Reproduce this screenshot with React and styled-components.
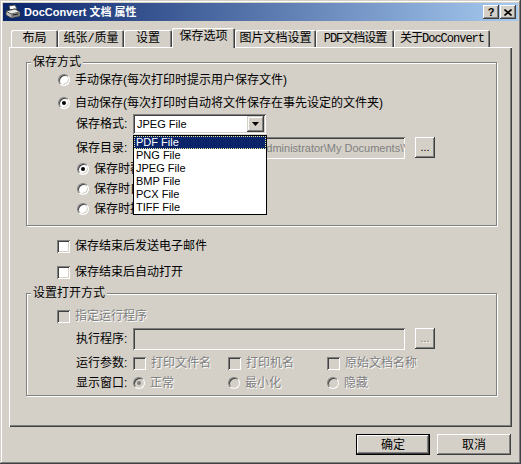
import React from 'react'
import styled, { createGlobalStyle } from 'styled-components'

const GlobalStyle = createGlobalStyle`
	html, body {
		margin: 0;
		padding: 0;
		background: #d4d0c8;
	}
	body {
		font-family: "Liberation Sans", "Noto Sans CJK SC", sans-serif;
		font-size: 12px;
		color: #000;
	}
`

const Window = styled.div`
	width: 521px;
	height: 464px;
	box-sizing: border-box;
	padding: 3px;
	background: #d4d0c8;
	box-shadow: inset -1px -1px #404040, inset 1px 1px #d4d0c8, inset -2px -2px #808080, inset 2px 2px #fff;
	display: flex;
	flex-direction: column;
`

const TitleBar = styled.div`
	height: 18px;
	display: flex;
	align-items: center;
	padding: 0 2px;
	background: linear-gradient(to right, #0a246a, #a6caf0);
`

const TitleText = styled.span`
	flex: 1;
	margin-left: 3px;
	color: #fff;
	font-weight: bold;
	font-size: 11px;
	line-height: 14px;
	font-family: "Liberation Sans", "Noto Sans CJK SC", sans-serif;
`

const CaptionButton = styled.div`
	width: 16px;
	height: 14px;
	box-sizing: border-box;
	margin-left: ${p => p.$gap || 0}px;
	background: #d4d0c8;
	box-shadow: inset -1px -1px #404040, inset 1px 1px #fff, inset -2px -2px #808080;
	display: flex;
	align-items: center;
	justify-content: center;
	font: bold 11px "Liberation Sans", sans-serif;
	line-height: 12px;
`

const Body = styled.div`
	flex: 1;
	padding: 7px 6px 0 6px;
	display: flex;
	flex-direction: column;
`

const TabStrip = styled.div`
	height: 19px;
	padding-left: 2px;
	display: flex;
	align-items: flex-end;
`

const Tab = styled.div`
	position: relative;
	z-index: ${p => (p.$active ? 2 : 0)};
	width: ${p => p.$w}px;
	height: ${p => (p.$active ? 20 : 17)}px;
	margin-bottom: ${p => (p.$active ? -1 : 0)}px;
	box-sizing: border-box;
	padding-bottom: ${p => (p.$active ? 2 : 0)}px;
	background: #d4d0c8;
	border-radius: 2px 2px 0 0;
	box-shadow: inset 1px 1px #fff, inset -1px 0 #404040, inset -2px 0 #808080;
	display: flex;
	align-items: center;
	justify-content: center;
	line-height: 14px;
	white-space: nowrap;
	font-family: "Liberation Mono", "Noto Sans CJK SC", monospace;
	font-size: 12px;
	letter-spacing: ${p => (p.$mono ? '-1px' : '0')};
`

const Panel = styled.div`
	height: 380px;
	box-sizing: border-box;
	background: #d4d0c8;
	box-shadow: inset 1px 1px #fff, inset -1px -1px #404040, inset -2px -2px #808080;
	display: flex;
	flex-direction: column;
`

const Group = styled.div`
	margin: ${p => p.$top}px 0 0 17px;
	width: 471px;
	height: ${p => p.$h}px;
	box-sizing: border-box;
	border: 1px solid #808080;
	box-shadow: 1px 1px 0 #fff, inset 1px 1px 0 #fff;
	display: flex;
	flex-direction: column;
`

const Legend = styled.div`
	align-self: flex-start;
	margin: -8px 0 0 4px;
	padding: 0 2px;
	height: 14px;
	line-height: 14px;
	background: #d4d0c8;
`

const Row = styled.div`
	display: flex;
	align-items: ${p => p.$align || 'center'};
	height: ${p => p.$h || 16}px;
	margin-top: ${p => p.$mt || 0}px;
	padding-left: ${p => p.$pl || 0}px;
	line-height: 14px;
	white-space: nowrap;
`

const Option = styled.label`
	display: flex;
	align-items: center;
	width: ${p => (p.$w ? `${p.$w}px` : 'auto')};
	flex: none;
	color: ${p => (p.$disabled ? '#808080' : '#000')};
	text-shadow: ${p => (p.$disabled ? '1px 1px 0 #fff' : 'none')};
`

const OptionText = styled.span`
	margin-left: 5px;
`

const FieldLabel = styled.span`
	width: 57px;
	flex: none;
	align-self: center;
`

const RadioMark = styled.span`
	width: 12px;
	height: 12px;
	flex: none;
	box-sizing: border-box;
	border-radius: 50%;
	background: ${p => (p.$disabled ? '#d4d0c8' : '#fff')};
	border: 1px solid;
	border-color: #808080 #fff #fff #808080;
	box-shadow: inset 1px 1px 0 #404040, inset -1px -1px 0 #d4d0c8;
	display: flex;
	align-items: center;
	justify-content: center;
	&::after {
		content: '';
		display: ${p => (p.$checked ? 'block' : 'none')};
		width: 4px;
		height: 4px;
		border-radius: 50%;
		background: ${p => (p.$disabled ? '#808080' : '#000')};
	}
`

const CheckMark = styled.span`
	width: 13px;
	height: 13px;
	flex: none;
	box-sizing: border-box;
	background: ${p => (p.$disabled ? '#d4d0c8' : '#fff')};
	box-shadow: inset 1px 1px #808080, inset -1px -1px #fff, inset 2px 2px #404040, inset -2px -2px #d4d0c8;
`

const Combo = styled.div`
	position: relative;
	width: 133px;
	height: 20px;
	box-sizing: border-box;
	padding: 2px;
	background: #fff;
	box-shadow: inset 1px 1px #808080, inset -1px -1px #fff, inset 2px 2px #404040, inset -2px -2px #d4d0c8;
	display: flex;
	align-items: center;
	font: 11px "Liberation Sans", sans-serif;
`

const ComboText = styled.span`
	flex: 1;
	padding-left: 2px;
`

const ComboArrow = styled.div`
	width: 17px;
	height: 16px;
	box-sizing: border-box;
	background: #d4d0c8;
	box-shadow: inset -1px -1px #404040, inset 1px 1px #d4d0c8, inset -2px -2px #808080, inset 2px 2px #fff;
	display: flex;
	align-items: center;
	justify-content: center;
`

const DropList = styled.ul`
	position: absolute;
	z-index: 10;
	top: 21px;
	left: 0;
	width: 134px;
	margin: 0;
	padding: 0;
	list-style: none;
	box-sizing: border-box;
	border: 1px solid #000;
	background: #fff;
`

const DropItem = styled.li`
	height: 13px;
	padding-left: 2px;
	font: 11px/13px "Liberation Sans", sans-serif;
	background: ${p => (p.$selected ? '#0a246a' : '#fff')};
	color: ${p => (p.$selected ? '#fff' : '#000')};
	outline: ${p => (p.$selected ? '1px dotted #e8e8a0' : 'none')};
	outline-offset: -1px;
`

const TextField = styled.div`
	width: ${p => p.$w}px;
	height: 22px;
	box-sizing: border-box;
	padding: 2px 3px;
	background: #d4d0c8;
	box-shadow: inset 1px 1px #808080, inset -1px -1px #fff, inset 2px 2px #404040, inset -2px -2px #d4d0c8;
	overflow: hidden;
	white-space: nowrap;
	color: #808080;
	font: 11px/18px "Liberation Sans", sans-serif;
	text-indent: ${p => p.$indent || 0}px;
`

const SmallButton = styled.div`
	width: 20px;
	height: 21px;
	margin-left: 10px;
	box-sizing: border-box;
	background: #d4d0c8;
	box-shadow: inset -1px -1px #404040, inset 1px 1px #fff, inset -2px -2px #808080;
	display: flex;
	align-items: center;
	justify-content: center;
	font: 11px/11px "Liberation Sans", sans-serif;
	color: ${p => (p.$disabled ? '#808080' : '#000')};
	text-shadow: ${p => (p.$disabled ? '1px 1px 0 #fff' : 'none')};
`

const ButtonRow = styled.div`
	margin-top: 7px;
	display: flex;
	justify-content: flex-end;
	gap: 7px;
	padding-right: 1px;
`

const DialogButton = styled.div`
	width: 74px;
	height: 21px;
	box-sizing: border-box;
	background: #d4d0c8;
	display: flex;
	align-items: center;
	justify-content: center;
	line-height: 14px;
	box-shadow: ${p =>
		p.$default
			? 'inset 0 0 0 1px #000, inset -2px -2px #404040, inset 2px 2px #fff, inset -3px -3px #808080'
			: 'inset -1px -1px #404040, inset 1px 1px #fff, inset -2px -2px #808080'};
`

const PrinterIcon = () => (
	<svg width="16" height="16" viewBox="0 0 16 16">
		<path d="M4 2 L10 1 L12 5 L5 6 Z" fill="#fff" stroke="#404040" strokeWidth="0.8" />
		<path d="M1 7 L10 5 L15 8 L15 12 L6 14 L1 11 Z" fill="#c0c0c0" stroke="#303030" strokeWidth="0.8" />
		<path d="M1 7 L10 5 L15 8 L6 10 Z" fill="#e8e8e8" stroke="#303030" strokeWidth="0.8" />
		<path d="M6 10 L15 8 L15 12 L6 14 Z" fill="#808080" />
		<path d="M8 11 L13 10" stroke="#202020" strokeWidth="1" />
	</svg>
)

const CloseGlyph = () => (
	<svg width="8" height="7" viewBox="0 0 8 7">
		<path d="M0.5 0.5 L7.5 6.5 M7.5 0.5 L0.5 6.5" stroke="#000" strokeWidth="1.6" />
	</svg>
)

const ArrowGlyph = () => (
	<svg width="7" height="4" viewBox="0 0 7 4">
		<path d="M0 0 H7 L3.5 4 Z" fill="#000" />
	</svg>
)

const Radio = ({ checked, disabled, w, children }) => (
	<Option $w={w} $disabled={disabled}>
		<RadioMark $checked={checked} $disabled={disabled} />
		<OptionText>{children}</OptionText>
	</Option>
)

const Check = ({ disabled, w, children }) => (
	<Option $w={w} $disabled={disabled}>
		<CheckMark $disabled={disabled} />
		<OptionText>{children}</OptionText>
	</Option>
)

const tabs = [
	{ label: '布局', w: 47 },
	{ label: '纸张/质量', w: 66 },
	{ label: '设置', w: 48 },
	{ label: '保存选项', w: 63, active: true },
	{ label: '图片文档设置', w: 81 },
	{ label: 'PDF文档设置', w: 78, mono: true },
	{ label: '关于DocConvert', w: 96, mono: true },
]

const formats = ['PDF File', 'PNG File', 'JPEG File', 'BMP File', 'PCX File', 'TIFF File']

const App = () => {
	return (
		<>
			<GlobalStyle />
			<Window>
				<TitleBar>
					<PrinterIcon />
					<TitleText>DocConvert 文档 属性</TitleText>
					<CaptionButton>?</CaptionButton>
					<CaptionButton $gap={1}><CloseGlyph /></CaptionButton>
				</TitleBar>
				<Body>
					<TabStrip>
						{tabs.map(t => (
							<Tab key={t.label} $w={t.w} $active={t.active} $mono={t.mono}>{t.label}</Tab>
						))}
					</TabStrip>
					<Panel>
						<Group $top={15} $h={164}>
							<Legend>保存方式</Legend>
							<Row $mt={3} $pl={31}>
								<Radio>手动保存(每次打印时提示用户保存文件)</Radio>
							</Row>
							<Row $mt={7} $pl={31}>
								<Radio checked>自动保存(每次打印时自动将文件保存在事先设定的文件夹)</Radio>
							</Row>
							<Row $mt={3} $pl={49} $h={20}>
								<FieldLabel>保存格式:</FieldLabel>
								<Combo>
									<ComboText>JPEG File</ComboText>
									<ComboArrow><ArrowGlyph /></ComboArrow>
									<DropList>
										{formats.map((f, i) => (
											<DropItem key={f} $selected={i === 0}>{f}</DropItem>
										))}
									</DropList>
								</Combo>
							</Row>
							<Row $mt={3} $pl={49} $h={22} $align="flex-start">
								<FieldLabel>保存目录:</FieldLabel>
								<TextField $w={272} $indent={-14}>C:\Documents and Settings\Administrator\My Documents\VirtualPrinter</TextField>
								<SmallButton>...</SmallButton>
							</Row>
							<Row $pl={50} $h={20}>
								<Radio checked>保存时覆盖同名文件</Radio>
							</Row>
							<Row $pl={50} $h={20}>
								<Radio>保存时自动重命名文件</Radio>
							</Row>
							<Row $pl={50} $h={20}>
								<Radio>保存时提示输入文件名</Radio>
							</Row>
						</Group>
						<Row $mt={12} $pl={48}>
							<Check>保存结束后发送电子邮件</Check>
						</Row>
						<Row $mt={10} $pl={48}>
							<Check>保存结束后自动打开</Check>
						</Row>
						<Group $top={13} $h={103}>
							<Legend>设置打开方式</Legend>
							<Row $mt={8} $pl={30}>
								<Check disabled>指定运行程序</Check>
							</Row>
							<Row $mt={4} $pl={49} $h={22} $align="flex-start">
								<FieldLabel>执行程序:</FieldLabel>
								<TextField $w={272} />
								<SmallButton $disabled>...</SmallButton>
							</Row>
							<Row $mt={5} $pl={49}>
								<FieldLabel>运行参数:</FieldLabel>
								<Check disabled w={95}>打印文件名</Check>
								<Check disabled w={99}>打印机名</Check>
								<Check disabled>原始文档名称</Check>
							</Row>
							<Row $mt={4} $pl={49}>
								<FieldLabel>显示窗口:</FieldLabel>
								<Radio disabled checked w={95}>正常</Radio>
								<Radio disabled w={99}>最小化</Radio>
								<Radio disabled>隐藏</Radio>
							</Row>
						</Group>
					</Panel>
					<ButtonRow>
						<DialogButton $default>确定</DialogButton>
						<DialogButton>取消</DialogButton>
					</ButtonRow>
				</Body>
			</Window>
		</>
	)
}

export default App
